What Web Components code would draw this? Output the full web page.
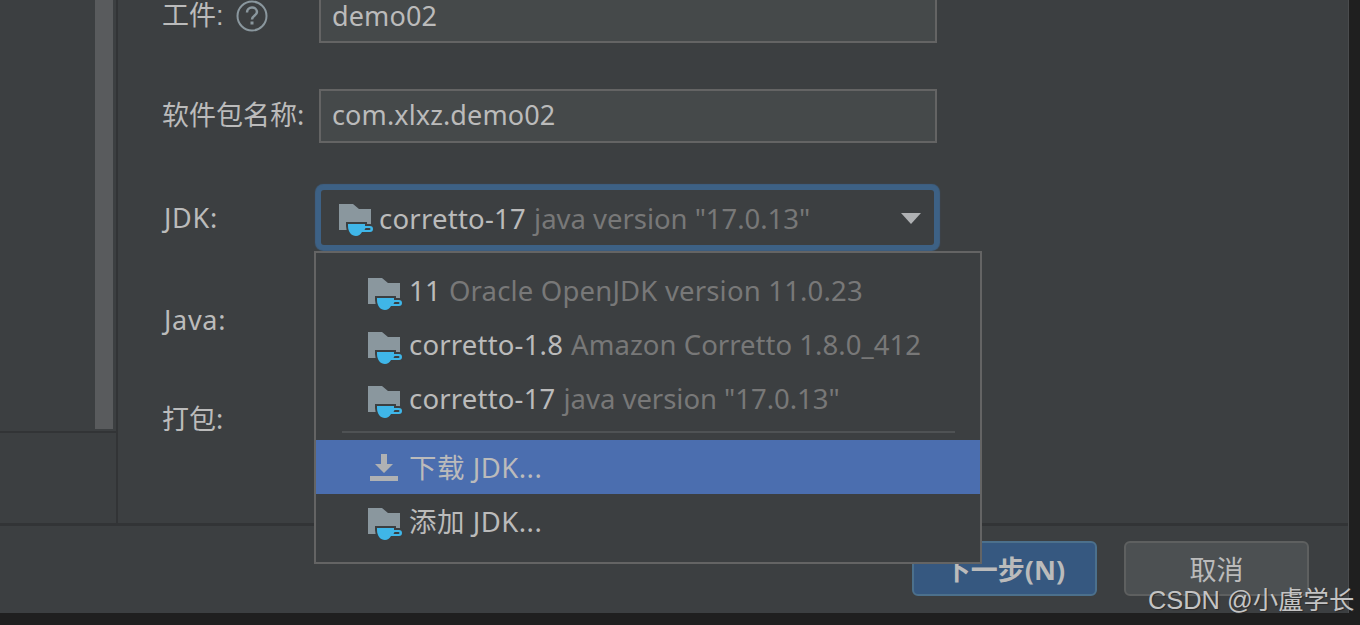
<!DOCTYPE html>
<html><head><meta charset="utf-8"><style>
html,body{margin:0;height:100%;overflow:hidden;background:#1f1f1f}
body{font:27px "Noto Sans","Noto Sans CJK SC",sans-serif;color:#bbb}
</style></head><body>
<ide-dialog>
  <form-row slot="form" label="工件:" help><text-field first value="demo02"></text-field></form-row>
  <form-row slot="form" label="软件包名称:"><text-field value="com.xlxz.demo02"></text-field></form-row>
  <form-row slot="form" label="JDK:"><jdk-combo name="corretto-17" detail="java version &quot;17.0.13&quot;"></jdk-combo></form-row>
  <form-row slot="form" label="Java:"></form-row>
  <form-row slot="form" label="打包:"></form-row>
  <ide-button slot="buttons" primary>下一步(N)</ide-button>
  <ide-button slot="buttons">取消</ide-button>
  <jdk-popup slot="overlay">
    <popup-item style="--ls:.18px" name="11" detail="Oracle OpenJDK version 11.0.23"></popup-item>
    <popup-item style="--ls:.03px" name="corretto-1.8" detail="Amazon Corretto 1.8.0_412"></popup-item>
    <popup-item style="--ls:-.03px" name="corretto-17" detail="java version &quot;17.0.13&quot;"></popup-item>
    <hr-line></hr-line>
    <popup-item style="--ns:.5px" name="下载 JDK..." icon="download" selected></popup-item>
    <popup-item style="--ns:.5px" name="添加 JDK..."></popup-item>
  </jdk-popup>
  <span slot="overlay" id="wm">CSDN @小盧学长</span>
</ide-dialog>
<script>
const def=(n,html)=>{customElements.define(n,class extends HTMLElement{
  connectedCallback(){ if(this.shadowRoot)return; const r=this.attachShadow({mode:'open'}); r.innerHTML=typeof html==='function'?html(this):html; }
});};
const FOLDER=`<svg width="36" height="38" viewBox="0 0 36 38"><path d="M0 6h14l6 5h12v21H0z" fill="#8a979e"/><path d="M9 26h17v2h5a3 3 0 0 1 0 6h-8c-1.500 2.500-3.500 4-6 4-4.500 0-8-4-8-10z" fill="#3fb6e8" stroke="#3c3f41" stroke-width="4" paint-order="stroke"/><path d="M26.500 30h4a1 1 0 0 1 0 2h-5z" fill="#3c3f41"/></svg>`;
const DL=`<svg width="36" height="38" viewBox="0 0 36 38"><path d="M13 6h6v10h6l-9 9-9-9h6zM2 28h28v5H2z" fill="#afb1b3"/></svg>`;
def('ide-dialog',`<style>
:host{display:block;position:relative;width:1360px;height:613px}
.panel{width:1349px;height:613px;background:#3c3f41;overflow:hidden;box-sizing:border-box;border-right:1px solid #4a4c4e}
.main{display:flex;height:523px;border-bottom:3px solid #323436}
.left{width:116px;flex:none;border-right:2px solid #323436}
.tree{height:433px;border-bottom:2px solid #323436;display:flex;justify-content:flex-end;padding-right:3px;box-sizing:border-box}
.bar{width:18px;height:429px;background:#595b5d}
.form{flex:1;display:grid;grid-template-rows:100px 101px 102px 101px 101px;margin-top:-11px;padding-left:45px;align-content:start}
.buttons{display:flex;justify-content:flex-end;gap:27px;padding:15px 39px 0 0}
</style><div class="panel"><div class="main"><div class="left"><div class="tree"><div class="bar"></div></div></div><div class="form"><slot name="form"></slot></div></div><div class="buttons"><slot name="buttons"></slot></div></div><slot name="overlay"></slot>`);
def('form-row',h=>{const cjk=/[^\x00-\x7f]/.test(h.getAttribute('label'));return `<style>
:host{display:flex;align-items:center;height:54px}
.l{width:156px;flex:none;display:flex;align-items:center;gap:12px;white-space:nowrap;color:#bbb;box-sizing:border-box;line-height:30px;${h.hasAttribute('help')?'font-family:"Liberation Sans","Noto Sans CJK SC",sans-serif;':''}${cjk?`padding-bottom:${h.hasAttribute('help')?1:2}px;margin-left:-1px;margin-right:1px`:'letter-spacing:.7px;padding:1px 0 0 1px'}}
svg{flex:none;margin-top:1px}
</style><div class="l">${h.getAttribute('label')}${h.hasAttribute('help')?`<svg width="32" height="32" viewBox="0 0 32 32"><circle cx="16" cy="16" r="14.500" fill="none" stroke="#8a979e" stroke-width="2"/><path d="M11 12.500c0-3 2.300-5 5-5s5 2 5 4.500c0 3.500-5 3.500-5 7.500" fill="none" stroke="#8a979e" stroke-width="2.500"/><rect x="14.500" y="21.500" width="3" height="3" fill="#8a979e"/></svg>`:''}</div><slot></slot>`;});
def('text-field',h=>`<style>
:host{display:flex;align-items:center;box-sizing:border-box;width:618px;height:54px;background:#45494a;border:2px solid #646464;padding:0 0 ${h.hasAttribute('first')?1:3}px 11px;color:#bbb;letter-spacing:.12px;line-height:30px}
</style>${h.getAttribute('value')}`);
def('jdk-combo',h=>`<style>
:host{display:flex;align-items:center;box-sizing:border-box;width:613px;height:55px;margin-left:2px;position:relative;border-radius:3px;box-shadow:0 0 1px 6px #3d6185;padding:2px 0 0 18px;white-space:nowrap;color:#bbb;font-size:27.5px}
svg.i{margin-right:4px;flex:none;margin-top:-2px}
span{letter-spacing:.25px}
.d{color:#787878;margin-left:8px;letter-spacing:-.03px}
.a{position:absolute;right:13px;top:23px;width:0;height:0;border-left:10px solid transparent;border-right:10px solid transparent;border-top:11px solid #afb1b3}
</style>${FOLDER.replace('<svg','<svg class="i"')}<span>${h.getAttribute('name')}</span><span class="d">${h.getAttribute('detail')}</span><div class="a"></div>`);
def('ide-button',h=>`<style>
:host{display:flex;align-items:center;justify-content:center;box-sizing:border-box;width:185px;height:55px;border-radius:6px;border:2px solid ${h.hasAttribute('primary')?'#4c708c':'#5e6060'};background:${h.hasAttribute('primary')?'#365880':'#4c5052'};color:#bbb;font-weight:${h.hasAttribute('primary')?700:400}}
</style><slot></slot>`);
def('jdk-popup',`<style>
:host{position:absolute;left:314px;top:251px;width:668px;height:313px;box-sizing:border-box;background:#3c3f41;border:2px solid #646464;padding-top:11px;display:block}
</style><slot></slot>`);
def('popup-item',h=>`<style>
:host{display:flex;align-items:center;height:54px;padding:0 0 2px 52px;box-sizing:border-box;white-space:nowrap;background:${h.hasAttribute('selected')?'#4b6eaf':'transparent'};color:#bbb;font-size:27.5px}
svg{margin-right:5px;flex:none;margin-top:2px}
span{letter-spacing:var(--ns,.2px)}
.d{color:#787878;margin-left:8px;letter-spacing:var(--ls,0)}
</style>${h.getAttribute('icon')==='download'?DL:FOLDER}<span>${h.getAttribute('name')}</span>${h.getAttribute('detail')?`<span class="d">${h.getAttribute('detail')}</span>`:''}`);
def('hr-line',`<style>:host{display:block;height:2px;margin:5px 25px 7px 26px;background:#4f5254}</style>`);
</script>
<style>
#wm{position:absolute;left:1148px;top:583px;font:25.400px/34px "Liberation Sans","Noto Sans CJK SC",sans-serif;color:#c4c4c4;text-shadow:1px 1px 1px #2b2b2b;white-space:nowrap}
</style>
</body></html>
